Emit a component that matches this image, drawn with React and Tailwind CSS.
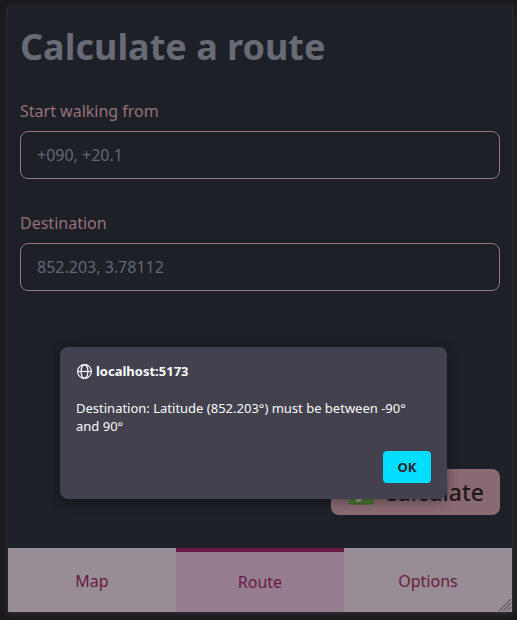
function Field({ id, label, value }) {
  return (
    <div className="flex flex-col gap-2">
      <label htmlFor={id} className="text-base leading-6 text-[#987179]">
        {label}
      </label>
      <input
        id={id}
        type="text"
        defaultValue={value}
        className="h-12 w-full rounded-lg border border-[#987880] bg-transparent px-4 text-base text-[#636975] outline-none"
      />
    </div>
  );
}

function Tab({ label, active }) {
  return (
    <button
      type="button"
      aria-current={active ? "page" : undefined}
      className={
        active
          ? "h-16 flex-1 border-t-4 border-[#681a41] bg-[#967e90] text-base text-[#681a41]"
          : "h-16 flex-1 bg-[#988d94] pt-px text-base text-[#681a41]"
      }
    >
      {label}
    </button>
  );
}

function CheckIcon() {
  return (
    <svg viewBox="0 0 28 28" className="size-7" aria-hidden="true">
      <rect x="2" y="1.5" width="25" height="25" rx="1.5" fill="#4b7a2e" />
      <path d="M2 25h25v0a1.5 1.5 0 0 1-1.5 1.5h-22A1.5 1.5 0 0 1 2 25z" fill="#41692a" />
      <path d="M6 15l4-2 3 4L21 5l3 1-10 17-2 1h-2z" fill="#9a9a9a" />
    </svg>
  );
}

function GlobeIcon() {
  return (
    <svg
      viewBox="0 0 16 16"
      className="size-4"
      fill="none"
      stroke="#fbfbfe"
      strokeWidth="1.2"
      aria-hidden="true"
    >
      <circle cx="8.5" cy="8.5" r="6.9" />
      <ellipse cx="8.5" cy="8.5" rx="3.4" ry="6.9" />
      <path d="M1.5 8.5h14" />
    </svg>
  );
}

function ResizeGrip() {
  return (
    <svg
      viewBox="0 0 14 14"
      className="absolute right-0 bottom-0 size-[14px]"
      stroke="#625a61"
      strokeWidth="1.1"
      aria-hidden="true"
    >
      <path d="M1 13L13 1M5 13l8-8M9 13l4-4" />
    </svg>
  );
}

function AlertDialog() {
  return (
    <div
      role="alertdialog"
      aria-labelledby="alert-title"
      aria-describedby="alert-text"
      className="absolute inset-x-0 top-[347px] mr-[70px] ml-[60px] flex flex-col rounded-lg bg-[#42414d] p-4 text-[13px] leading-[18px] text-[#fbfbfe] shadow-[0_2px_12px_rgba(0,0,0,0.4)]"
    >
      <div className="flex items-center gap-1 pb-5">
        <GlobeIcon />
        <h2 id="alert-title" className="leading-4 font-bold">
          localhost:5173
        </h2>
      </div>
      <p id="alert-text">
        Destination: Latitude (852.203°) must be between -90° and 90°
      </p>
      <button
        type="button"
        className="mt-4 h-8 w-12 self-end rounded-sm bg-[#00ddff] font-bold text-[#2b2a33]"
      >
        OK
      </button>
    </div>
  );
}

export default function App() {
  return (
    <div className="relative flex h-screen flex-col bg-[#1b1a1e] px-1 pt-[6px] pb-[7px] font-['Noto_Sans',sans-serif]">
      <div className="relative ml-[3px] flex flex-1 flex-col border border-[#2b2a2f] bg-[#1d2027] shadow-[0_2px_6px_rgba(43,42,48,0.9)]">
        <main className="flex flex-1 flex-col gap-8 px-3 pt-5 pb-[33px]">
          <h1 className="text-4xl leading-10 font-bold text-[#686a76]">
            Calculate a route
          </h1>
          <Field id="start" label="Start walking from" value="+090, +20.1" />
          <Field id="destination" label="Destination" value="852.203, 3.78112" />
          <button
            type="button"
            className="mt-auto flex h-[46px] items-center gap-2 self-end rounded-lg bg-[#896972] px-4 text-[23px] font-medium text-[#1d171c]"
          >
            <CheckIcon />
            Calculate
          </button>
        </main>
        <nav className="relative flex">
          <Tab label="Map" />
          <Tab label="Route" active />
          <Tab label="Options" />
          <ResizeGrip />
        </nav>
      </div>
      <AlertDialog />
    </div>
  );
}
